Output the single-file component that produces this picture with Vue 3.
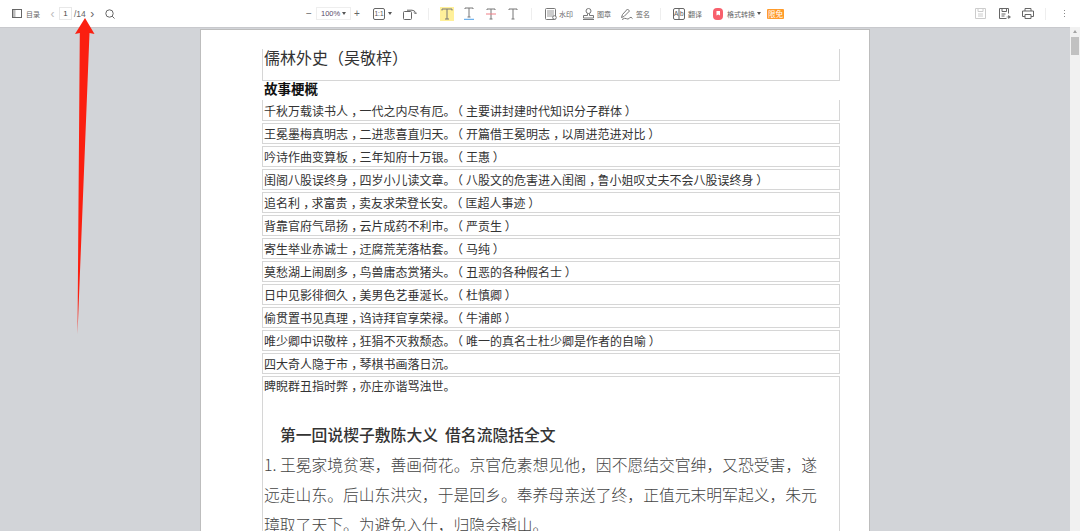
<template>
  <div class="viewer">
    <div class="toolbar">
      <div class="tool-left">
        <svg class="ico" width="10" height="9" viewBox="0 0 10 9"><rect x=".5" y=".5" width="9" height="8" fill="none" stroke="#666"/><rect x="1" y="1" width="2.500" height="7" fill="#bbb"/></svg>
        <span class="tool-text">目录</span>
        <span class="chev off">‹</span>
        <span class="page-input">1</span>
        <span class="page-total">/14</span>
        <span class="chev">›</span>
        <svg class="search" width="10" height="10" viewBox="0 0 10 10"><circle cx="4.500" cy="4.500" r="3.700" fill="none" stroke="#666"/><path d="M7.200 7.200l2.300 2.300" stroke="#666"/></svg>
      </div>

      <div class="tool-zoom">
        <span class="pm">−</span>
        <span class="zoom-select"><span class="pct">100%</span><i class="caret"></i></span>
        <span class="pm">+</span>
        <svg class="one" width="12" height="12" viewBox="0 0 12 12"><rect x=".5" y=".5" width="11" height="11" rx="1.500" fill="none" stroke="#666"/><text x="6" y="8.400" font-size="6.500" text-anchor="middle" fill="#555" font-family="Liberation Sans">1:1</text></svg>
        <i class="caret one-caret"></i>
        <svg class="rotate" width="14" height="12" viewBox="0 0 14 12"><rect x=".5" y="3.500" width="8" height="8" rx="1" fill="none" stroke="#666"/><path d="M4 2.200h5q3 0 3.500 3" fill="none" stroke="#666"/><path d="M11 4.500l1.500 1.500 1.500-1.500" fill="none" stroke="#666"/></svg>
      </div>

      <i class="sep sep-a"></i>

      <div class="tool-marks">
        <span class="mark active"><svg width="12" height="12" viewBox="0 0 12 12"><path d="M1 2.500V1h10v1.500M6 1v10M4 11h4" fill="none" stroke="#777"/></svg></span>
        <span class="mark"><svg width="12" height="13" viewBox="0 0 12 13"><path d="M2 2V1h8v1M6 1v9M4.500 10h3" fill="none" stroke="#777"/><path d="M1 12.300h10" stroke="#4a9ee8"/></svg></span>
        <span class="mark"><svg width="12" height="12" viewBox="0 0 12 12"><path d="M2 2V1h8v1M6 1v10M4.500 11h3" fill="none" stroke="#777"/><path d="M1 6h10" stroke="#f07f86"/></svg></span>
        <span class="mark"><svg width="12" height="12" viewBox="0 0 12 12"><path d="M2 2V1h8v1M6 1v10M4.500 11h3" fill="none" stroke="#777"/></svg></span>
      </div>

      <i class="sep sep-b"></i>

      <div class="tool-actions">
        <span class="action">
          <svg width="12" height="12" viewBox="0 0 12 12"><rect x=".5" y=".5" width="10" height="11" rx="1" fill="#fff" stroke="#777"/><rect x="2" y="2" width="7" height="7" fill="#ccc"/><circle cx="9.500" cy="9.500" r="1.800" fill="#fff" stroke="#777"/></svg>
          <span class="tool-text">水印</span>
        </span>
        <span class="action">
          <svg width="13" height="12" viewBox="0 0 13 12"><circle cx="6.500" cy="3" r="2.500" fill="none" stroke="#777"/><path d="M5.500 5.500v2H1.500v2.500h10V7.500h-4v-2M1 11.500h11" fill="none" stroke="#777"/></svg>
          <span class="tool-text">图章</span>
        </span>
        <span class="action sign">
          <svg width="13" height="12" viewBox="0 0 13 12"><path d="M1.500 9.500l1-3 5-5.500 2 2-5.500 5.500zM2 11.500q3-2 4.500-.8t3-.7 3 .6" fill="none" stroke="#777"/></svg>
          <span class="tool-text">签名</span>
        </span>
      </div>

      <i class="sep sep-c"></i>

      <span class="action translate">
        <svg width="12" height="12" viewBox="0 0 12 12"><rect x=".5" y=".5" width="11" height="11" rx="1.500" fill="none" stroke="#666"/><path d="M6 .5v11" stroke="#666"/><text x="3.200" y="8.300" font-size="6.500" text-anchor="middle" fill="#555" font-family="Liberation Sans">A</text><text x="8.800" y="8.300" font-size="6.500" text-anchor="middle" fill="#555" font-family="Liberation Sans">b</text></svg>
        <span class="tool-text">翻译</span>
      </span>
      <span class="convert">
        <svg width="10" height="12" viewBox="0 0 10 12"><rect width="10" height="12" rx="4" fill="#f8606c"/><path d="M3.500 3h3.500v4.500L5.200 6.500 3.500 7.500z" fill="#fff"/></svg>
        <span class="tool-text">格式转换</span>
        <i class="caret dark"></i>
        <span class="badge">限免</span>
      </span>

      <div class="tool-right">
        <svg width="11" height="11" viewBox="0 0 11 11"><path d="M.5.5h10v10H.5zM3 .5v3h5v-3M3 6h5M3 8h5" fill="none" stroke="#ccc"/></svg>
        <svg class="save-as" width="12" height="11" viewBox="0 0 12 11"><path d="M7.500 10.500H.5V.5h9v5M3 .5v3h4.500v-3M2.500 6h4M2.500 8h3" fill="none" stroke="#666"/><path d="M7.500 9h3M9.500 7.500L11.500 9l-2 1.500z" fill="#666" stroke="#666" stroke-width=".6"/></svg>
        <svg class="print" width="12" height="11" viewBox="0 0 12 11"><path d="M3 3V.5h6V3M3 8.500H.5V3h11v5.500H9M3 6.500h6v4H3z" fill="none" stroke="#666"/></svg>
        <i class="sep sep-d"></i>
        <span class="dots"><i></i><i></i><i></i></span>
      </div>
    </div>

    <div class="stage">
      <div class="paper">
        <div class="sheet">
          <h1 class="book-title">儒林外史（吴敬梓）</h1>
          <h2 class="summary">故事梗概</h2>
          <div v-for="(line, i) in lines" :key="line" class="row" :class="{ first: i === 0 }">
            <span v-for="(part, j) in split(line)" :key="j" :class="punct[part]">{{ part }}</span>
          </div>
          <div class="last-box">
            <div class="last-line">
              <span v-for="(part, j) in split(lastLine)" :key="j" :class="punct[part]">{{ part }}</span>
            </div>
            <h3 class="chapter">第一回说楔子敷陈大义&nbsp;&nbsp;借名流隐括全文</h3>
            <p class="body-text">1. 王冕家境贫寒，善画荷花。京官危素想见他，因不愿结交官绅，又恐受害，遂远走山东。后山东洪灾，于是回乡。奉养母亲送了终，正值元末明军起义，朱元璋取了天下。为避免入仕，归隐会稽山。</p>
          </div>
        </div>
      </div>
    </div>

    <div class="scrollbar">
      <i class="up"></i>
      <i class="thumb"></i>
    </div>

    <svg class="arrow" width="100" height="340" viewBox="0 0 100 340"><polygon points="85,18 94.500,34 89.500,33 77.500,334 79.800,33 75,34" fill="#fb1f10"/></svg>
  </div>
</template>

<script setup>
const lines = [
  '千秋万载读书人，一代之内尽有厄。（主要讲封建时代知识分子群体）',
  '王冕墨梅真明志，二进悲喜直归天。（开篇借王冕明志，以周进范进对比）',
  '吟诗作曲变算板，三年知府十万银。（王惠）',
  '闺阁八股误终身，四岁小儿读文章。（八股文的危害进入闺阁，鲁小姐叹丈夫不会八股误终身）',
  '追名利，求富贵，卖友求荣登长安。（匡超人事迹）',
  '背靠官府气昂扬，云片成药不利市。（严贡生）',
  '寄生举业赤诚士，迂腐荒芜落枯套。（马纯）',
  '莫愁湖上闹剧多，鸟兽庸态赏猪头。（丑恶的各种假名士）',
  '日中见影徘徊久，美男色艺垂涎长。（杜慎卿）',
  '偷贯置书见真理，诌诗拜官享荣禄。（牛浦郎）',
  '唯少卿中识敬梓，狂狷不灭救颓态。（唯一的真名士杜少卿是作者的自喻）',
  '四大奇人隐于市，琴棋书画落日沉。',
]
const lastLine = '睥睨群丑指时弊，亦庄亦谐骂浊世。'

// the reference font sets these marks differently from Noto, so they get their own spacing
const punct = { '，': 'comma', '（': 'open', '）': 'close' }
const split = (line) => line.split(/([，（）])/).filter(Boolean)
</script>

<style>
html, body {
  margin: 0;
  overflow: hidden;
}
</style>

<style scoped>
.viewer {
  position: relative;
  width: 1080px;
  height: 531px;
  overflow: hidden;
  background: #d2d4d8;
  font-family: "Noto Sans CJK SC", "Liberation Sans", sans-serif;
}

.toolbar {
  display: flex;
  align-items: center;
  height: 27px;
  background: #fff;
  color: #555;
}

.tool-text {
  font-size: 7px;
  color: #666;
  line-height: 12px;
}

.tool-left {
  display: flex;
  align-items: center;
  width: 310px;
  padding-left: 12px;
  box-sizing: border-box;
  flex: none;
}

.tool-left .tool-text {
  margin-left: 4px;
}

.chev {
  width: 7px;
  font-size: 12px;
  line-height: 12px;
  font-family: "Liberation Sans", sans-serif;
  color: #666;
  text-align: center;
}

.chev.off {
  margin: 0 3px 0 9px;
  color: #bbb;
}

.page-input {
  width: 13px;
  height: 13px;
  border: 1px solid #e8e8e8;
  box-sizing: border-box;
  font: 8px/11px "Liberation Sans", sans-serif;
  text-align: center;
  color: #444;
}

.page-total {
  margin-left: 2px;
  font: 8.500px "Liberation Sans", sans-serif;
  color: #666;
}

.page-total + .chev {
  margin-left: 3px;
}

.search {
  margin-left: 9px;
}

.tool-zoom {
  display: flex;
  align-items: center;
  margin-left: -4px;
}

.pm {
  width: 6px;
  font: 10px/12px "Liberation Sans", sans-serif;
  text-align: center;
  color: #666;
}

.zoom-select {
  display: flex;
  align-items: center;
  justify-content: space-between;
  width: 35px;
  height: 13px;
  margin: 0 3px 0 4px;
  padding: 0 4px;
  border: 1px solid #eee;
  box-sizing: border-box;
}

.pct {
  font: 7.500px "Liberation Sans", sans-serif;
  color: #5a4a6a;
}

.caret {
  display: block;
  width: 0;
  height: 0;
  border-left: 2px solid transparent;
  border-right: 2px solid transparent;
  border-top: 3px solid #555;
}

.caret.dark {
  margin-left: -1px;
}

.one {
  margin-left: 13px;
}

.one-caret {
  margin-left: 3px;
}

.rotate {
  margin-left: 11px;
}

.sep {
  display: block;
  flex: none;
  width: 1px;
  height: 12px;
  background: #eee;
}

.sep-a {
  margin-left: 11px;
}

.tool-marks {
  display: flex;
  align-items: center;
  gap: 8px;
  margin-left: 11px;
}

.mark {
  display: flex;
  align-items: center;
  justify-content: center;
  width: 14px;
  height: 14px;
}

.mark.active {
  background: #fff09a;
}

.sep-b {
  margin-left: 11px;
}

.tool-actions {
  display: flex;
  align-items: center;
  gap: 9px;
  margin-left: 13px;
}

.action {
  display: flex;
  align-items: center;
  gap: 2px;
}

.action.sign,
.action.translate {
  gap: 3px;
}

.sep-c {
  margin-left: 10px;
}

.translate {
  margin-left: 12px;
}

.convert {
  display: flex;
  align-items: center;
  gap: 3px;
  margin-left: 11px;
}

.convert .tool-text {
  margin-left: 1px;
}

.badge {
  width: 17px;
  height: 10px;
  margin-left: 3px;
  border-radius: 1px;
  background: #ff9b2a;
  color: #fff;
  font-size: 7.500px;
  line-height: 10px;
  text-align: center;
}

.tool-right {
  display: flex;
  align-items: center;
  margin-left: auto;
  margin-right: 15px;
}

.save-as {
  margin-left: 13px;
}

.print {
  margin-left: 11px;
}

.sep-d {
  margin-left: 11px;
}

.dots {
  display: flex;
  flex-direction: column;
  gap: 1.500px;
  margin-left: 18px;
}

.dots i {
  display: block;
  width: 1.500px;
  height: 1.500px;
  background: #888;
}

.stage {
  display: flex;
  height: 504px;
  padding: 1px 0 0 200px;
  box-sizing: border-box;
  border-top: 1px solid #c8c9cd;
}

.paper {
  width: 670px;
  height: 560px;
  background: #fff;
  border: 1px solid #bdbdbd;
  box-sizing: border-box;
  flex: none;
}

.sheet {
  width: 578px;
  margin: 19px 0 0 61px;
  color: #333;
}

.book-title {
  height: 31px;
  margin: 0;
  padding-left: 1px;
  border: 1px solid #d6d6d6;
  border-top: none;
  font-size: 16px;
  font-weight: 400;
  line-height: 17px;
  color: #333;
}

.summary {
  height: 19px;
  margin: 0;
  padding-left: 2px;
  font-size: 13.500px;
  font-weight: 700;
  line-height: 15px;
  color: #111;
}

.row {
  height: 19px;
  margin-bottom: 2px;
  padding-left: 1px;
  border: 1px solid #d6d6d6;
  font-size: 12px;
  line-height: 19px;
  color: #333;
}

.row.first {
  height: 20px;
  border-top: none;
  line-height: 21px;
}

.comma,
.open,
.close {
  font-feature-settings: "palt" 1;
}

.comma {
  margin: 0 1.500px 0 4px;
}

.open {
  margin: 0 3.500px 0 1px;
}

.close {
  margin-left: 3px;
}

.last-box {
  padding-left: 1px;
  border: 1px solid #d6d6d6;
  border-bottom: none;
}

.last-line {
  height: 19px;
  font-size: 12px;
  line-height: 17px;
  color: #333;
}

.chapter {
  margin: 28px 0 0 16px;
  font-size: 15.800px;
  font-weight: 500;
  line-height: 22px;
  color: #333;
}

.body-text {
  margin: 4px 20px 0 0;
  font-size: 15.800px;
  font-weight: 300;
  line-height: 30px;
  color: #444;
}

.scrollbar {
  position: absolute;
  top: 27px;
  right: 0;
  width: 10px;
  height: 504px;
  background: #f1f1f1;
}

.up {
  position: absolute;
  top: 3px;
  left: 3px;
  width: 0;
  height: 0;
  border-left: 2px solid transparent;
  border-right: 2px solid transparent;
  border-bottom: 3px solid #a3a3a3;
}

.thumb {
  position: absolute;
  top: 10px;
  left: 1px;
  width: 8px;
  height: 18px;
  background: #c1c1c1;
}

.arrow {
  position: absolute;
  top: 0;
  left: 0;
  pointer-events: none;
}
</style>
